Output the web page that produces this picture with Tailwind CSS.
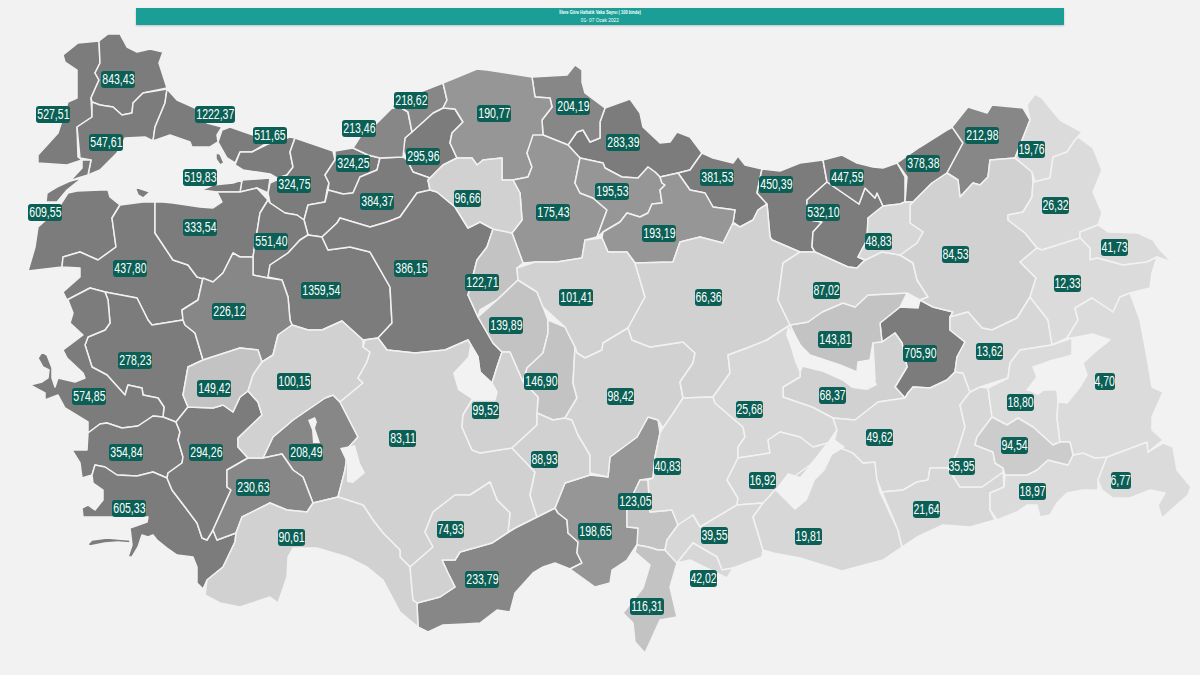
<!DOCTYPE html>
<html lang="tr">
<head>
<meta charset="utf-8">
<title>İllere Göre Haftalık Vaka Sayısı</title>
<script src="https://cdn.jsdelivr.net/npm/@tailwindcss/browser@4"></script>
</head>
<body class="bg-[#f2f2f2] font-['Liberation_Sans',Arial,sans-serif]">
<div class="relative w-[1200px] h-[675px] overflow-hidden">
<svg class="absolute inset-0" width="1200" height="675" viewBox="0 0 1200 675">
<g stroke="#f2f2f2" stroke-width="1.5" stroke-linejoin="round">
<g fill="#7d7c7c">
<polygon points="63,55 78,43 99,41 100,63 95,73 99,80 91,98 92,117 77,127 78,157 82,160 67,165 38,163 38,155 58,133 68,102 77,98 77,70 65,62"/>
<polygon points="99,41 108,34 120,34 127,47 137,52 150,49 163,52 159,63 167,88 143,93 133,103 132,113 122,115 113,107 100,105 92,102 91,98 99,80 95,73 100,63"/>
<polygon points="92,102 100,105 113,107 122,115 132,113 133,103 143,93 167,89 165,103 155,127 153,141 145,137 125,138 117,153 100,170 88,175 91,160 80,158 77,127 92,117"/>
<polygon points="167,89 177,100 195,108 207,123 222,127 217,135 218,142 210,147 192,147 190,142 170,135 153,141 155,127 165,103"/>
<polygon points="218,142 222,130 230,127 253,135 267,143 252,152 240,152 235,163 227,158"/>
<polygon points="216,153 220,154 224,163 220,165 216,159"/>
<polygon points="235,165 240,152 252,152 268,144 290,137 295,138 290,152 293,167 287,175 277,178 270,174 243,170"/>
<polygon points="242,180 270,178 268,193 257,188 240,192"/>
<polygon points="202,190 213,185 233,183 242,180 240,192 217,192"/>
<polygon points="295,138 333,151 335,160 325,175 329,183 327,190 325,202 308,205 304,220 297,215 285,213 270,203 268,193 270,183 287,175 293,167 290,152"/>
<polygon points="335,151 353,148 368,155 380,158 377,170 360,177 353,193 343,194 328,190 329,183 325,175 335,160"/>
<polygon points="405,138 433,113 443,108 455,109 463,122 452,133 450,143 457,158 443,165 430,178 413,172 407,160 403,150"/>
<polygon points="353,193 343,194 328,190 325,202 308,205 304,220 308,235 322,237 337,223 340,218 370,227 387,222 400,217 417,193 430,190 428,180 430,178 413,172 407,160 403,157 380,158 377,170 360,177"/>
<polygon points="46,202 47,193 57,187 70,181 82,178 67,190 57,202"/>
<polygon points="82,160 91,160 88,175 78,178 70,181 82,168"/>
<polygon points="135,187 150,192 143,198 138,195"/>
<polygon points="77,191 100,190 108,190 110,197 120,205 112,218 116,247 98,260 80,252 63,257 62,267 28,271 35,247 38,227 57,210 68,193"/>
<polygon points="155,202 143,202 120,205 112,218 116,247 98,260 80,252 63,257 62,267 80,268 80,277 63,292 67,300 90,288 105,292 137,298 148,320 152,325 183,320 182,310 198,300 203,278 197,277 188,265 173,260 155,233"/>
<polygon points="155,202 155,233 173,260 188,265 197,277 213,282 223,273 233,253 240,257 253,257 260,213 268,200 257,188 240,192 217,192 222,202 213,208 200,207 173,203 163,202"/>
<polygon points="268,200 260,213 253,257 253,275 268,278 270,265 288,253 300,240 308,235 304,220 297,215 285,213 270,203"/>
<polygon points="308,235 300,240 288,253 270,265 268,277 282,280 288,297 290,320 292,325 308,330 322,330 342,321 363,340 378,338 392,323 390,287 370,252 350,247 328,250 322,237"/>
<polygon points="322,237 328,250 350,247 370,252 390,287 392,323 378,338 387,350 415,353 445,350 468,340 478,357 480,372 492,383 497,367 502,352 493,343 478,317 468,295 477,260 487,247 493,229 480,222 468,228 455,207 437,192 430,190 417,193 400,217 387,222 370,227 340,218 337,223"/>
<polygon points="105,292 108,300 110,323 105,330 88,337 85,345 92,367 107,375 125,395 128,385 142,388 143,395 158,398 164,407 163,417 176,422 188,407 183,395 188,367 203,360 198,343 195,333 185,325 183,320 152,325 148,320 137,298"/>
<polygon points="67,300 90,288 105,292 108,300 110,323 105,330 88,337 85,345 92,367 107,375 125,395 128,385 142,388 143,395 158,398 164,407 163,417 153,416 138,426 122,428 107,423 100,424 88,433 88,422 65,408 58,395 45,400 45,393 30,385 42,382 48,378 49,370 43,367 38,358 42,352 47,355 52,368 52,378 55,387 58,378 75,382 85,378 83,373 67,358 63,350 83,335 70,323 73,313 68,300"/>
<polygon points="88,433 100,424 107,423 122,428 138,426 153,416 163,417 176,422 180,432 178,440 183,457 182,463 168,473 167,478 153,472 137,476 117,475 105,467 95,465 92,475 82,478 80,463 72,450 87,450"/>
<polygon points="95,465 105,467 117,475 137,476 153,472 167,478 172,490 185,507 197,523 202,538 207,540 213,530 217,540 236,533 235,542 223,567 207,580 203,589 197,583 197,567 193,557 177,555 167,548 157,540 153,535 148,537 142,535 138,547 132,557 128,557 132,545 130,528 147,522 148,517 100,517 83,517 82,508 88,505 95,510 103,500 103,490 93,483 92,475"/>
<polygon points="88,544 92,540 107,538 118,539 130,540 130,543 118,542 105,543 90,546"/>
<polygon points="176,422 188,407 213,408 223,405 233,412 240,397 248,391 258,402 262,415 238,438 238,447 248,458 227,470 227,487 231,490 213,530 207,540 202,538 197,523 185,507 172,490 167,478 168,473 182,463 183,457 178,440 180,432"/>
<polygon points="605,108 630,99 640,113 643,127 660,143 670,142 677,132 690,137 702,153 690,170 678,173 660,177 655,172 648,167 638,178 622,177 605,168 603,163 580,158 568,145 577,132 583,130 590,142 600,138 600,122"/>
<polygon points="702,153 713,158 733,163 738,156 745,165 762,169 757,193 767,204 758,210 753,220 740,227 733,222 735,210 713,207 705,193 690,190 678,173 690,170"/>
<polygon points="762,169 780,171 800,163 823,160 827,182 807,200 807,212 810,220 822,222 813,232 812,247 815,252 800,252 772,240 770,237 767,204 757,193"/>
<polygon points="827,182 859,204 865,188 875,198 877,193 883,206 868,218 867,240 858,257 865,260 857,268 848,267 815,252 812,247 813,232 822,222 810,220 807,212 807,200"/>
<polygon points="823,160 842,155 857,163 873,167 883,168 897,163 905,177 905,202 900,204 883,206 877,193 875,198 865,188 859,204 827,182"/>
<polygon points="897,163 920,147 947,130 953,127 963,143 947,173 932,183 913,202 905,202 907,177"/>
<polygon points="920,300 933,307 953,312 950,317 950,330 965,342 957,357 955,372 947,380 930,388 913,387 908,393 905,398 895,387 907,367 902,343 895,333 882,342 880,323 900,307 918,308"/>
</g>
<g fill="#888787">
<polygon points="353,148 360,137 377,123 392,108 400,107 408,112 412,132 405,138 403,157 380,158 368,155"/>
<polygon points="392,108 395,100 420,92 443,83 447,100 443,108 433,113 412,132 408,112 400,107"/>
<polygon points="532,77 567,75 575,65 582,70 582,82 585,93 605,108 600,122 600,138 590,142 583,130 577,132 568,145 543,135 542,120 552,107 550,98 535,97"/>
<polygon points="952,127 968,107 987,113 992,105 1023,108 1030,120 1015,158 990,160 988,177 980,185 973,183 960,197 958,180 947,173 963,143"/>
<polygon points="203,278 213,282 223,273 233,253 240,257 253,257 253,275 268,278 282,280 288,297 290,320 292,325 278,335 273,355 262,362 258,350 240,348 203,360 198,343 195,333 185,325 183,320 182,310 198,300"/>
<polygon points="263,458 273,437 293,420 325,398 333,395 340,402 358,437 348,448 345,470 338,497 313,503 303,477 293,470 282,454"/>
<polygon points="227,470 248,458 263,458 282,454 293,470 303,477 313,503 307,512 287,510 270,503 242,517 236,533 217,540 213,530 231,490 227,487"/>
<polygon points="417,603 440,597 455,587 448,573 442,560 455,560 460,552 492,543 515,528 537,517 555,508 558,513 567,520 568,533 578,542 577,553 582,563 570,569 555,563 543,567 533,573 515,593 510,612 497,610 480,623 465,624 443,625 428,632 418,627"/>
</g>
<g fill="#979696">
<polygon points="443,83 477,69 487,70 532,77 535,97 550,98 552,107 542,120 543,135 533,138 527,153 532,167 528,177 513,180 502,180 502,158 483,160 477,165 472,158 457,158 450,143 452,133 463,122 455,109 443,108 447,100"/>
<polygon points="533,135 543,135 568,145 580,158 575,183 580,193 593,198 607,210 597,237 585,240 582,258 557,262 535,262 523,263 512,233 522,220 520,193 513,180 528,177 532,167 527,153"/>
<polygon points="580,158 603,163 605,168 622,177 638,178 648,167 655,172 660,177 662,183 665,185 660,190 662,203 652,204 648,213 640,217 627,213 620,222 603,232 597,237 607,210 593,198 580,193 575,183"/>
<polygon points="678,173 660,177 662,183 665,185 660,190 662,203 652,204 648,213 640,217 627,213 620,222 603,232 602,238 608,252 627,252 635,263 673,262 680,242 700,237 723,243 733,223 735,210 713,207 705,193 690,190"/>
<polygon points="555,508 565,483 590,475 608,477 610,457 637,437 648,417 658,420 660,433 655,457 653,478 640,480 627,507 627,527 638,528 638,543 627,560 612,570 610,583 595,587 570,569 582,563 577,553 578,542 568,533 567,520 558,513"/>
</g>
<g fill="#c4c3c3">
<polygon points="203,360 240,348 258,350 262,362 253,375 248,391 240,397 233,412 223,405 213,408 188,407 183,395 188,367"/>
<polygon points="493,229 512,233 523,263 517,268 518,280 497,300 480,310 478,317 468,295 477,260 487,247"/>
<polygon points="478,317 497,300 518,280 537,292 543,307 548,320 548,333 543,353 527,368 523,382 510,352 502,352 493,343"/>
<polygon points="548,320 565,327 575,347 573,383 577,398 565,418 553,420 537,413 538,397 523,382 527,368 543,353 548,333"/>
<polygon points="640,480 648,480 650,512 672,510 678,525 667,540 665,550 658,550 648,547 637,545 638,528 627,527 627,507"/>
<polygon points="637,545 648,547 658,550 665,550 677,563 670,587 677,617 660,620 645,653 635,642 633,623 623,613 643,588 650,565 635,552"/>
<polygon points="808,322 822,312 843,303 855,307 868,295 907,293 900,307 880,323 882,342 873,343 870,360 858,362 857,372 840,365 825,360 810,355 800,345 790,325"/>
</g>
<g fill="#d2d1d1">
<polygon points="278,335 292,325 308,330 322,330 342,321 363,340 363,347 370,352 367,362 358,378 363,383 340,402 333,395 325,398 293,420 273,437 263,458 248,458 238,447 238,438 262,415 258,402 248,391 253,375 262,362 273,355"/>
<polygon points="340,402 363,383 358,378 367,362 370,352 363,347 365,340 378,338 387,350 415,353 445,350 468,340 478,357 480,372 492,383 497,392 495,400 472,400 463,415 462,427 472,450 480,453 512,448 535,472 530,495 537,517 515,528 508,532 510,513 497,500 490,482 470,495 455,495 433,512 425,532 433,547 410,567 400,557 400,550 383,533 373,520 363,505 338,497 345,470 348,448 358,437"/>
<polygon points="236,533 242,517 270,503 287,510 307,512 313,503 338,497 363,505 373,520 383,533 400,550 400,557 410,567 413,600 417,603 418,627 400,612 383,580 367,567 347,557 317,548 293,548 288,557 287,577 278,603 270,597 240,607 220,603 205,595 207,580 223,567 235,542"/>
<polygon points="433,512 455,495 470,495 490,482 497,500 510,513 508,532 492,543 460,552 455,560 442,560 448,573 455,587 440,597 417,603 413,600 410,567 433,547 425,532"/>
<polygon points="428,180 430,190 437,192 455,207 468,228 480,222 493,229 512,233 522,220 520,193 513,180 502,180 502,158 483,160 477,165 472,158 457,158 443,165"/>
<polygon points="517,268 535,262 557,262 582,258 585,240 602,238 608,252 627,252 635,263 645,297 628,328 603,343 602,350 585,358 577,353 575,347 565,327 543,307 537,292 518,280"/>
<polygon points="502,352 510,352 523,382 538,397 537,413 537,425 512,448 480,453 472,450 462,427 463,415 472,400 495,400 497,392 492,383 497,367"/>
<polygon points="537,413 553,420 565,418 572,420 578,435 590,455 590,475 565,483 555,508 537,517 530,495 535,472 512,448 537,425"/>
<polygon points="603,343 628,328 632,340 650,347 683,342 695,353 693,363 680,382 683,398 672,415 663,428 658,420 648,417 637,437 610,457 608,477 590,473 590,455 578,435 572,420 565,418 577,398 573,383 575,347 577,353 585,358 602,350"/>
<polygon points="635,263 673,262 680,242 700,237 723,243 733,223 740,227 753,220 758,210 767,204 770,237 772,240 800,252 783,263 778,300 790,325 767,340 747,348 728,355 730,373 713,397 683,398 680,382 693,363 695,353 683,342 650,347 632,340 628,328 645,297"/>
<polygon points="800,252 815,252 848,267 857,268 865,260 882,252 900,255 913,263 917,280 928,297 920,300 907,293 868,295 855,307 843,303 822,312 808,322 790,325 778,300 783,263"/>
<polygon points="800,365 830,372 855,385 875,380 873,343 882,342 895,333 902,343 907,367 895,387 905,398 878,402 855,420 833,418 812,407 800,403 783,397 783,387 800,377"/>
<polygon points="947,173 958,180 960,197 973,183 980,185 988,177 990,160 1015,158 1032,172 1033,182 1032,197 1023,212 1008,215 1008,220 1025,233 1037,248 1020,262 1036,278 1030,297 1017,318 992,330 982,328 968,312 950,317 953,312 933,307 920,300 928,297 917,280 913,263 900,255 917,243 923,232 910,223 910,205 932,183"/>
</g>
<g fill="#d8d7d7">
<polygon points="883,206 900,204 905,202 913,202 910,205 910,223 923,232 917,243 900,255 882,252 865,260 858,257 867,240 868,218"/>
<polygon points="660,433 663,428 672,415 683,398 713,397 715,403 743,427 745,437 738,447 738,458 727,480 738,498 737,505 700,527 693,515 678,525 672,510 650,512 648,480 653,478 655,457"/>
<polygon points="715,403 713,397 730,373 728,355 747,348 767,340 790,325 800,350 800,377 783,387 783,397 800,403 812,407 833,418 837,430 828,443 813,447 800,437 780,432 768,440 770,453 738,458 738,447 745,437 743,427"/>
<polygon points="738,458 770,453 768,440 780,432 800,437 813,447 828,443 815,480 790,490 763,503 737,505 738,498 727,480"/>
<polygon points="737,505 763,503 753,517 763,550 762,557 733,568 722,570 717,557 700,547 693,543 677,563 665,550 667,540 678,525 693,515 700,527"/>
<polygon points="693,543 700,547 717,557 722,570 733,568 727,578 690,560 677,563"/>
<polygon points="775,490 763,503 753,517 763,550 773,553 800,558 842,571 883,560 902,547 898,530 880,492 877,480 875,462 863,463 853,453 833,440 810,465"/>
<polygon points="837,430 833,418 855,420 878,402 905,398 908,393 913,387 930,388 947,380 955,372 963,373 970,392 960,405 965,427 957,453 950,468 930,468 928,480 917,482 903,490 882,492 877,480 875,462 863,463 853,453 833,445"/>
<polygon points="882,492 903,490 917,482 928,480 930,468 948,468 960,487 982,487 1003,472 1004,487 990,493 990,510 995,520 970,527 943,525 917,537 902,547 898,530"/>
<polygon points="960,405 970,392 980,387 988,388 992,417 977,437 975,445 993,452 995,463 1003,468 1003,472 982,487 960,487 948,468 957,453 965,427"/>
<polygon points="950,317 968,312 982,328 992,330 1017,318 1030,297 1048,320 1052,345 1020,350 1010,363 1008,378 980,387 970,392 963,373 955,372 957,357 965,342 950,330"/>
</g>
<g fill="#dcdbdb">
<polygon points="1030,120 1027,105 1035,94 1042,98 1050,108 1060,120 1082,132 1075,140 1067,152 1053,157 1050,178 1035,182 1032,172 1015,158"/>
<polygon points="1050,178 1053,157 1067,152 1075,140 1078,137 1093,148 1102,170 1093,192 1102,213 1098,225 1080,232 1080,238 1042,250 1037,248 1025,233 1008,220 1008,215 1023,212 1032,197 1033,182"/>
<polygon points="1080,232 1098,225 1108,232 1138,233 1153,240 1160,250 1172,262 1157,257 1147,262 1123,265 1097,258 1090,260 1090,248 1080,238"/>
<polygon points="1037,248 1042,250 1080,238 1090,248 1090,260 1097,258 1123,265 1147,262 1157,257 1152,273 1150,288 1130,293 1120,297 1113,312 1092,298 1075,308 1078,320 1067,338 1052,345 1048,320 1030,297 1036,278 1020,262"/>
<polygon points="988,388 1008,378 1010,363 1020,350 1052,345 1072,338 1072,355 1033,367 1037,377 1027,390 1045,390 1057,390 1058,402 1057,418 1060,442 1053,445 1033,427 1018,418 1007,425 992,417"/>
<polygon points="1005,475 1027,475 1037,470 1048,460 1068,465 1073,455 1083,453 1095,458 1107,457 1098,480 1098,490 1083,490 1067,493 1057,503 1050,515 1040,517 1037,505 1027,505 1017,512 997,520 990,510 990,493 1004,487"/>
<polygon points="1107,457 1147,442 1148,452 1163,443 1173,447 1177,470 1191,487 1188,495 1162,518 1158,505 1165,493 1150,490 1130,498 1113,498 1102,490 1098,480"/>
<polygon points="1075,308 1092,298 1113,312 1120,297 1130,293 1140,320 1147,357 1152,387 1163,392 1152,417 1152,430 1163,440 1148,452 1147,442 1107,457 1095,458 1083,453 1073,455 1070,442 1060,442 1057,418 1058,402 1067,403 1080,387 1087,375 1083,363 1095,352 1110,340 1093,334 1072,338 1067,338 1078,320"/>
</g>
<polygon fill="#cdcccc" points="992,417 1007,425 1018,418 1033,427 1053,445 1060,442 1070,442 1073,455 1068,465 1048,460 1037,470 1027,475 1005,475 1003,468 995,463 993,452 975,445 977,437"/>
</g>
<g fill="#f2f2f2">
<polygon points="308,420 315,417 317,422 315,428 320,443 313,443 312,430"/>
<polygon points="340,448 355,445 360,463 365,473 353,483 347,482 347,463"/>
<polygon points="453,373 468,357 470,345 478,357 480,372 492,383 497,392 495,400 473,400 458,390"/>
<polygon points="788,326 797,338 807,355 833,363 850,375 857,383 875,380 877,385 867,390 852,388 843,381 823,372 803,367 800,373 795,362 790,345 786,335"/>
<polygon points="775,490 788,473 800,477 810,465 825,445 833,438 845,447 832,455 825,470 815,480 807,500 795,510 785,500"/>
<polygon points="1072,347 1093,334 1110,340 1095,352 1083,363 1087,375 1080,387 1067,403 1058,402 1057,390 1045,390 1038,395 1027,390 1037,377 1033,367 1050,360 1072,355"/>
</g>
</svg>

<header class="relative mx-[136px] pt-2">
<div class="h-[17px] bg-[#1a9e96] shadow-[0_1px_2px_rgba(0,0,0,0.2)] text-white text-center leading-none flex flex-col items-center justify-center gap-[2px]">
<p class="text-[5px] font-bold scale-x-[0.8]">İllere Göre Haftalık Vaka Sayısı ( 100 binde)</p>
<p class="text-[6px] scale-x-[0.8]">01- 07 Ocak 2022</p>
</div>
</header>

<div class="text-white text-[14px] leading-[17px] text-center">
<span class="absolute left-[101px] top-[71px] w-[34px] h-[17px] rounded-[3px] bg-[#0b5f55] flex items-center justify-center whitespace-nowrap"><span class="inline-block scale-x-[0.75]">843,43</span></span>
<span class="absolute left-[36px] top-[106px] w-[34px] h-[17px] rounded-[3px] bg-[#0b5f55] flex items-center justify-center whitespace-nowrap"><span class="inline-block scale-x-[0.75]">527,51</span></span>
<span class="absolute left-[89px] top-[134px] w-[34px] h-[17px] rounded-[3px] bg-[#0b5f55] flex items-center justify-center whitespace-nowrap"><span class="inline-block scale-x-[0.75]">547,61</span></span>
<span class="absolute left-[195px] top-[106px] w-[40px] h-[17px] rounded-[3px] bg-[#0b5f55] flex items-center justify-center whitespace-nowrap"><span class="inline-block scale-x-[0.75]">1222,37</span></span>
<span class="absolute left-[253px] top-[127px] w-[34px] h-[17px] rounded-[3px] bg-[#0b5f55] flex items-center justify-center whitespace-nowrap"><span class="inline-block scale-x-[0.75]">511,65</span></span>
<span class="absolute left-[342px] top-[120px] w-[34px] h-[17px] rounded-[3px] bg-[#0b5f55] flex items-center justify-center whitespace-nowrap"><span class="inline-block scale-x-[0.75]">213,46</span></span>
<span class="absolute left-[394px] top-[92px] w-[34px] h-[17px] rounded-[3px] bg-[#0b5f55] flex items-center justify-center whitespace-nowrap"><span class="inline-block scale-x-[0.75]">218,62</span></span>
<span class="absolute left-[183px] top-[169px] w-[34px] h-[17px] rounded-[3px] bg-[#0b5f55] flex items-center justify-center whitespace-nowrap"><span class="inline-block scale-x-[0.75]">519,83</span></span>
<span class="absolute left-[336px] top-[155px] w-[34px] h-[17px] rounded-[3px] bg-[#0b5f55] flex items-center justify-center whitespace-nowrap"><span class="inline-block scale-x-[0.75]">324,25</span></span>
<span class="absolute left-[277px] top-[176px] w-[34px] h-[17px] rounded-[3px] bg-[#0b5f55] flex items-center justify-center whitespace-nowrap"><span class="inline-block scale-x-[0.75]">324,75</span></span>
<span class="absolute left-[360px] top-[193px] w-[34px] h-[17px] rounded-[3px] bg-[#0b5f55] flex items-center justify-center whitespace-nowrap"><span class="inline-block scale-x-[0.75]">384,37</span></span>
<span class="absolute left-[183px] top-[219px] w-[34px] h-[17px] rounded-[3px] bg-[#0b5f55] flex items-center justify-center whitespace-nowrap"><span class="inline-block scale-x-[0.75]">333,54</span></span>
<span class="absolute left-[28px] top-[204px] w-[34px] h-[17px] rounded-[3px] bg-[#0b5f55] flex items-center justify-center whitespace-nowrap"><span class="inline-block scale-x-[0.75]">609,55</span></span>
<span class="absolute left-[254px] top-[233px] w-[34px] h-[17px] rounded-[3px] bg-[#0b5f55] flex items-center justify-center whitespace-nowrap"><span class="inline-block scale-x-[0.75]">551,40</span></span>
<span class="absolute left-[113px] top-[260px] w-[34px] h-[17px] rounded-[3px] bg-[#0b5f55] flex items-center justify-center whitespace-nowrap"><span class="inline-block scale-x-[0.75]">437,80</span></span>
<span class="absolute left-[301px] top-[282px] w-[40px] h-[17px] rounded-[3px] bg-[#0b5f55] flex items-center justify-center whitespace-nowrap"><span class="inline-block scale-x-[0.75]">1359,54</span></span>
<span class="absolute left-[212px] top-[303px] w-[34px] h-[17px] rounded-[3px] bg-[#0b5f55] flex items-center justify-center whitespace-nowrap"><span class="inline-block scale-x-[0.75]">226,12</span></span>
<span class="absolute left-[118px] top-[352px] w-[34px] h-[17px] rounded-[3px] bg-[#0b5f55] flex items-center justify-center whitespace-nowrap"><span class="inline-block scale-x-[0.75]">278,23</span></span>
<span class="absolute left-[72px] top-[388px] w-[34px] h-[17px] rounded-[3px] bg-[#0b5f55] flex items-center justify-center whitespace-nowrap"><span class="inline-block scale-x-[0.75]">574,85</span></span>
<span class="absolute left-[197px] top-[380px] w-[34px] h-[17px] rounded-[3px] bg-[#0b5f55] flex items-center justify-center whitespace-nowrap"><span class="inline-block scale-x-[0.75]">149,42</span></span>
<span class="absolute left-[277px] top-[373px] w-[34px] h-[17px] rounded-[3px] bg-[#0b5f55] flex items-center justify-center whitespace-nowrap"><span class="inline-block scale-x-[0.75]">100,15</span></span>
<span class="absolute left-[109px] top-[444px] w-[34px] h-[17px] rounded-[3px] bg-[#0b5f55] flex items-center justify-center whitespace-nowrap"><span class="inline-block scale-x-[0.75]">354,84</span></span>
<span class="absolute left-[189px] top-[444px] w-[34px] h-[17px] rounded-[3px] bg-[#0b5f55] flex items-center justify-center whitespace-nowrap"><span class="inline-block scale-x-[0.75]">294,26</span></span>
<span class="absolute left-[289px] top-[444px] w-[34px] h-[17px] rounded-[3px] bg-[#0b5f55] flex items-center justify-center whitespace-nowrap"><span class="inline-block scale-x-[0.75]">208,49</span></span>
<span class="absolute left-[236px] top-[479px] w-[34px] h-[17px] rounded-[3px] bg-[#0b5f55] flex items-center justify-center whitespace-nowrap"><span class="inline-block scale-x-[0.75]">230,63</span></span>
<span class="absolute left-[112px] top-[500px] w-[34px] h-[17px] rounded-[3px] bg-[#0b5f55] flex items-center justify-center whitespace-nowrap"><span class="inline-block scale-x-[0.75]">605,33</span></span>
<span class="absolute left-[278px] top-[529px] w-[27px] h-[17px] rounded-[3px] bg-[#0b5f55] flex items-center justify-center whitespace-nowrap"><span class="inline-block scale-x-[0.75]">90,61</span></span>
<span class="absolute left-[477px] top-[105px] w-[34px] h-[17px] rounded-[3px] bg-[#0b5f55] flex items-center justify-center whitespace-nowrap"><span class="inline-block scale-x-[0.75]">190,77</span></span>
<span class="absolute left-[556px] top-[98px] w-[34px] h-[17px] rounded-[3px] bg-[#0b5f55] flex items-center justify-center whitespace-nowrap"><span class="inline-block scale-x-[0.75]">204,19</span></span>
<span class="absolute left-[606px] top-[134px] w-[34px] h-[17px] rounded-[3px] bg-[#0b5f55] flex items-center justify-center whitespace-nowrap"><span class="inline-block scale-x-[0.75]">283,39</span></span>
<span class="absolute left-[406px] top-[148px] w-[34px] h-[17px] rounded-[3px] bg-[#0b5f55] flex items-center justify-center whitespace-nowrap"><span class="inline-block scale-x-[0.75]">295,96</span></span>
<span class="absolute left-[700px] top-[169px] w-[34px] h-[17px] rounded-[3px] bg-[#0b5f55] flex items-center justify-center whitespace-nowrap"><span class="inline-block scale-x-[0.75]">381,53</span></span>
<span class="absolute left-[759px] top-[176px] w-[34px] h-[17px] rounded-[3px] bg-[#0b5f55] flex items-center justify-center whitespace-nowrap"><span class="inline-block scale-x-[0.75]">450,39</span></span>
<span class="absolute left-[454px] top-[190px] w-[27px] h-[17px] rounded-[3px] bg-[#0b5f55] flex items-center justify-center whitespace-nowrap"><span class="inline-block scale-x-[0.75]">96,66</span></span>
<span class="absolute left-[595px] top-[183px] w-[34px] h-[17px] rounded-[3px] bg-[#0b5f55] flex items-center justify-center whitespace-nowrap"><span class="inline-block scale-x-[0.75]">195,53</span></span>
<span class="absolute left-[536px] top-[204px] w-[34px] h-[17px] rounded-[3px] bg-[#0b5f55] flex items-center justify-center whitespace-nowrap"><span class="inline-block scale-x-[0.75]">175,43</span></span>
<span class="absolute left-[642px] top-[225px] w-[34px] h-[17px] rounded-[3px] bg-[#0b5f55] flex items-center justify-center whitespace-nowrap"><span class="inline-block scale-x-[0.75]">193,19</span></span>
<span class="absolute left-[394px] top-[260px] w-[34px] h-[17px] rounded-[3px] bg-[#0b5f55] flex items-center justify-center whitespace-nowrap"><span class="inline-block scale-x-[0.75]">386,15</span></span>
<span class="absolute left-[465px] top-[274px] w-[34px] h-[17px] rounded-[3px] bg-[#0b5f55] flex items-center justify-center whitespace-nowrap"><span class="inline-block scale-x-[0.75]">122,71</span></span>
<span class="absolute left-[559px] top-[289px] w-[34px] h-[17px] rounded-[3px] bg-[#0b5f55] flex items-center justify-center whitespace-nowrap"><span class="inline-block scale-x-[0.75]">101,41</span></span>
<span class="absolute left-[695px] top-[289px] w-[27px] h-[17px] rounded-[3px] bg-[#0b5f55] flex items-center justify-center whitespace-nowrap"><span class="inline-block scale-x-[0.75]">66,36</span></span>
<span class="absolute left-[489px] top-[317px] w-[34px] h-[17px] rounded-[3px] bg-[#0b5f55] flex items-center justify-center whitespace-nowrap"><span class="inline-block scale-x-[0.75]">139,89</span></span>
<span class="absolute left-[965px] top-[127px] w-[34px] h-[17px] rounded-[3px] bg-[#0b5f55] flex items-center justify-center whitespace-nowrap"><span class="inline-block scale-x-[0.75]">212,98</span></span>
<span class="absolute left-[906px] top-[155px] w-[34px] h-[17px] rounded-[3px] bg-[#0b5f55] flex items-center justify-center whitespace-nowrap"><span class="inline-block scale-x-[0.75]">378,38</span></span>
<span class="absolute left-[830px] top-[169px] w-[34px] h-[17px] rounded-[3px] bg-[#0b5f55] flex items-center justify-center whitespace-nowrap"><span class="inline-block scale-x-[0.75]">447,59</span></span>
<span class="absolute left-[1018px] top-[141px] w-[27px] h-[17px] rounded-[3px] bg-[#0b5f55] flex items-center justify-center whitespace-nowrap"><span class="inline-block scale-x-[0.75]">19,76</span></span>
<span class="absolute left-[1042px] top-[197px] w-[27px] h-[17px] rounded-[3px] bg-[#0b5f55] flex items-center justify-center whitespace-nowrap"><span class="inline-block scale-x-[0.75]">26,32</span></span>
<span class="absolute left-[806px] top-[204px] w-[34px] h-[17px] rounded-[3px] bg-[#0b5f55] flex items-center justify-center whitespace-nowrap"><span class="inline-block scale-x-[0.75]">532,10</span></span>
<span class="absolute left-[865px] top-[233px] w-[27px] h-[17px] rounded-[3px] bg-[#0b5f55] flex items-center justify-center whitespace-nowrap"><span class="inline-block scale-x-[0.75]">48,83</span></span>
<span class="absolute left-[942px] top-[246px] w-[27px] h-[17px] rounded-[3px] bg-[#0b5f55] flex items-center justify-center whitespace-nowrap"><span class="inline-block scale-x-[0.75]">84,53</span></span>
<span class="absolute left-[1101px] top-[239px] w-[27px] h-[17px] rounded-[3px] bg-[#0b5f55] flex items-center justify-center whitespace-nowrap"><span class="inline-block scale-x-[0.75]">41,73</span></span>
<span class="absolute left-[1054px] top-[275px] w-[27px] h-[17px] rounded-[3px] bg-[#0b5f55] flex items-center justify-center whitespace-nowrap"><span class="inline-block scale-x-[0.75]">12,33</span></span>
<span class="absolute left-[813px] top-[282px] w-[27px] h-[17px] rounded-[3px] bg-[#0b5f55] flex items-center justify-center whitespace-nowrap"><span class="inline-block scale-x-[0.75]">87,02</span></span>
<span class="absolute left-[818px] top-[331px] w-[34px] h-[17px] rounded-[3px] bg-[#0b5f55] flex items-center justify-center whitespace-nowrap"><span class="inline-block scale-x-[0.75]">143,81</span></span>
<span class="absolute left-[903px] top-[345px] w-[34px] h-[17px] rounded-[3px] bg-[#0b5f55] flex items-center justify-center whitespace-nowrap"><span class="inline-block scale-x-[0.75]">705,90</span></span>
<span class="absolute left-[976px] top-[343px] w-[27px] h-[17px] rounded-[3px] bg-[#0b5f55] flex items-center justify-center whitespace-nowrap"><span class="inline-block scale-x-[0.75]">13,62</span></span>
<span class="absolute left-[524px] top-[373px] w-[34px] h-[17px] rounded-[3px] bg-[#0b5f55] flex items-center justify-center whitespace-nowrap"><span class="inline-block scale-x-[0.75]">146,90</span></span>
<span class="absolute left-[472px] top-[402px] w-[27px] h-[17px] rounded-[3px] bg-[#0b5f55] flex items-center justify-center whitespace-nowrap"><span class="inline-block scale-x-[0.75]">99,52</span></span>
<span class="absolute left-[389px] top-[430px] w-[27px] h-[17px] rounded-[3px] bg-[#0b5f55] flex items-center justify-center whitespace-nowrap"><span class="inline-block scale-x-[0.75]">83,11</span></span>
<span class="absolute left-[607px] top-[388px] w-[27px] h-[17px] rounded-[3px] bg-[#0b5f55] flex items-center justify-center whitespace-nowrap"><span class="inline-block scale-x-[0.75]">98,42</span></span>
<span class="absolute left-[736px] top-[401px] w-[27px] h-[17px] rounded-[3px] bg-[#0b5f55] flex items-center justify-center whitespace-nowrap"><span class="inline-block scale-x-[0.75]">25,68</span></span>
<span class="absolute left-[531px] top-[451px] w-[27px] h-[17px] rounded-[3px] bg-[#0b5f55] flex items-center justify-center whitespace-nowrap"><span class="inline-block scale-x-[0.75]">88,93</span></span>
<span class="absolute left-[654px] top-[458px] w-[27px] h-[17px] rounded-[3px] bg-[#0b5f55] flex items-center justify-center whitespace-nowrap"><span class="inline-block scale-x-[0.75]">40,83</span></span>
<span class="absolute left-[749px] top-[472px] w-[27px] h-[17px] rounded-[3px] bg-[#0b5f55] flex items-center justify-center whitespace-nowrap"><span class="inline-block scale-x-[0.75]">16,92</span></span>
<span class="absolute left-[618px] top-[493px] w-[34px] h-[17px] rounded-[3px] bg-[#0b5f55] flex items-center justify-center whitespace-nowrap"><span class="inline-block scale-x-[0.75]">123,05</span></span>
<span class="absolute left-[437px] top-[521px] w-[27px] h-[17px] rounded-[3px] bg-[#0b5f55] flex items-center justify-center whitespace-nowrap"><span class="inline-block scale-x-[0.75]">74,93</span></span>
<span class="absolute left-[578px] top-[523px] w-[34px] h-[17px] rounded-[3px] bg-[#0b5f55] flex items-center justify-center whitespace-nowrap"><span class="inline-block scale-x-[0.75]">198,65</span></span>
<span class="absolute left-[701px] top-[527px] w-[27px] h-[17px] rounded-[3px] bg-[#0b5f55] flex items-center justify-center whitespace-nowrap"><span class="inline-block scale-x-[0.75]">39,55</span></span>
<span class="absolute left-[465px] top-[571px] w-[34px] h-[17px] rounded-[3px] bg-[#0b5f55] flex items-center justify-center whitespace-nowrap"><span class="inline-block scale-x-[0.75]">233,79</span></span>
<span class="absolute left-[690px] top-[570px] w-[27px] h-[17px] rounded-[3px] bg-[#0b5f55] flex items-center justify-center whitespace-nowrap"><span class="inline-block scale-x-[0.75]">42,02</span></span>
<span class="absolute left-[630px] top-[598px] w-[34px] h-[17px] rounded-[3px] bg-[#0b5f55] flex items-center justify-center whitespace-nowrap"><span class="inline-block scale-x-[0.75]">116,31</span></span>
<span class="absolute left-[819px] top-[387px] w-[27px] h-[17px] rounded-[3px] bg-[#0b5f55] flex items-center justify-center whitespace-nowrap"><span class="inline-block scale-x-[0.75]">68,37</span></span>
<span class="absolute left-[1095px] top-[373px] w-[20px] h-[17px] rounded-[3px] bg-[#0b5f55] flex items-center justify-center whitespace-nowrap"><span class="inline-block scale-x-[0.75]">4,70</span></span>
<span class="absolute left-[1007px] top-[394px] w-[27px] h-[17px] rounded-[3px] bg-[#0b5f55] flex items-center justify-center whitespace-nowrap"><span class="inline-block scale-x-[0.75]">18,80</span></span>
<span class="absolute left-[866px] top-[429px] w-[27px] h-[17px] rounded-[3px] bg-[#0b5f55] flex items-center justify-center whitespace-nowrap"><span class="inline-block scale-x-[0.75]">49,62</span></span>
<span class="absolute left-[1001px] top-[437px] w-[27px] h-[17px] rounded-[3px] bg-[#0b5f55] flex items-center justify-center whitespace-nowrap"><span class="inline-block scale-x-[0.75]">94,54</span></span>
<span class="absolute left-[949px] top-[458px] w-[26px] h-[17px] rounded-[3px] bg-[#0b5f55] flex items-center justify-center whitespace-nowrap"><span class="inline-block scale-x-[0.75]">35,95</span></span>
<span class="absolute left-[1019px] top-[483px] w-[27px] h-[17px] rounded-[3px] bg-[#0b5f55] flex items-center justify-center whitespace-nowrap"><span class="inline-block scale-x-[0.75]">18,97</span></span>
<span class="absolute left-[1111px] top-[472px] w-[20px] h-[17px] rounded-[3px] bg-[#0b5f55] flex items-center justify-center whitespace-nowrap"><span class="inline-block scale-x-[0.75]">6,77</span></span>
<span class="absolute left-[913px] top-[501px] w-[27px] h-[17px] rounded-[3px] bg-[#0b5f55] flex items-center justify-center whitespace-nowrap"><span class="inline-block scale-x-[0.75]">21,64</span></span>
<span class="absolute left-[795px] top-[528px] w-[27px] h-[17px] rounded-[3px] bg-[#0b5f55] flex items-center justify-center whitespace-nowrap"><span class="inline-block scale-x-[0.75]">19,81</span></span>
</div>
</div>
</body>
</html>
